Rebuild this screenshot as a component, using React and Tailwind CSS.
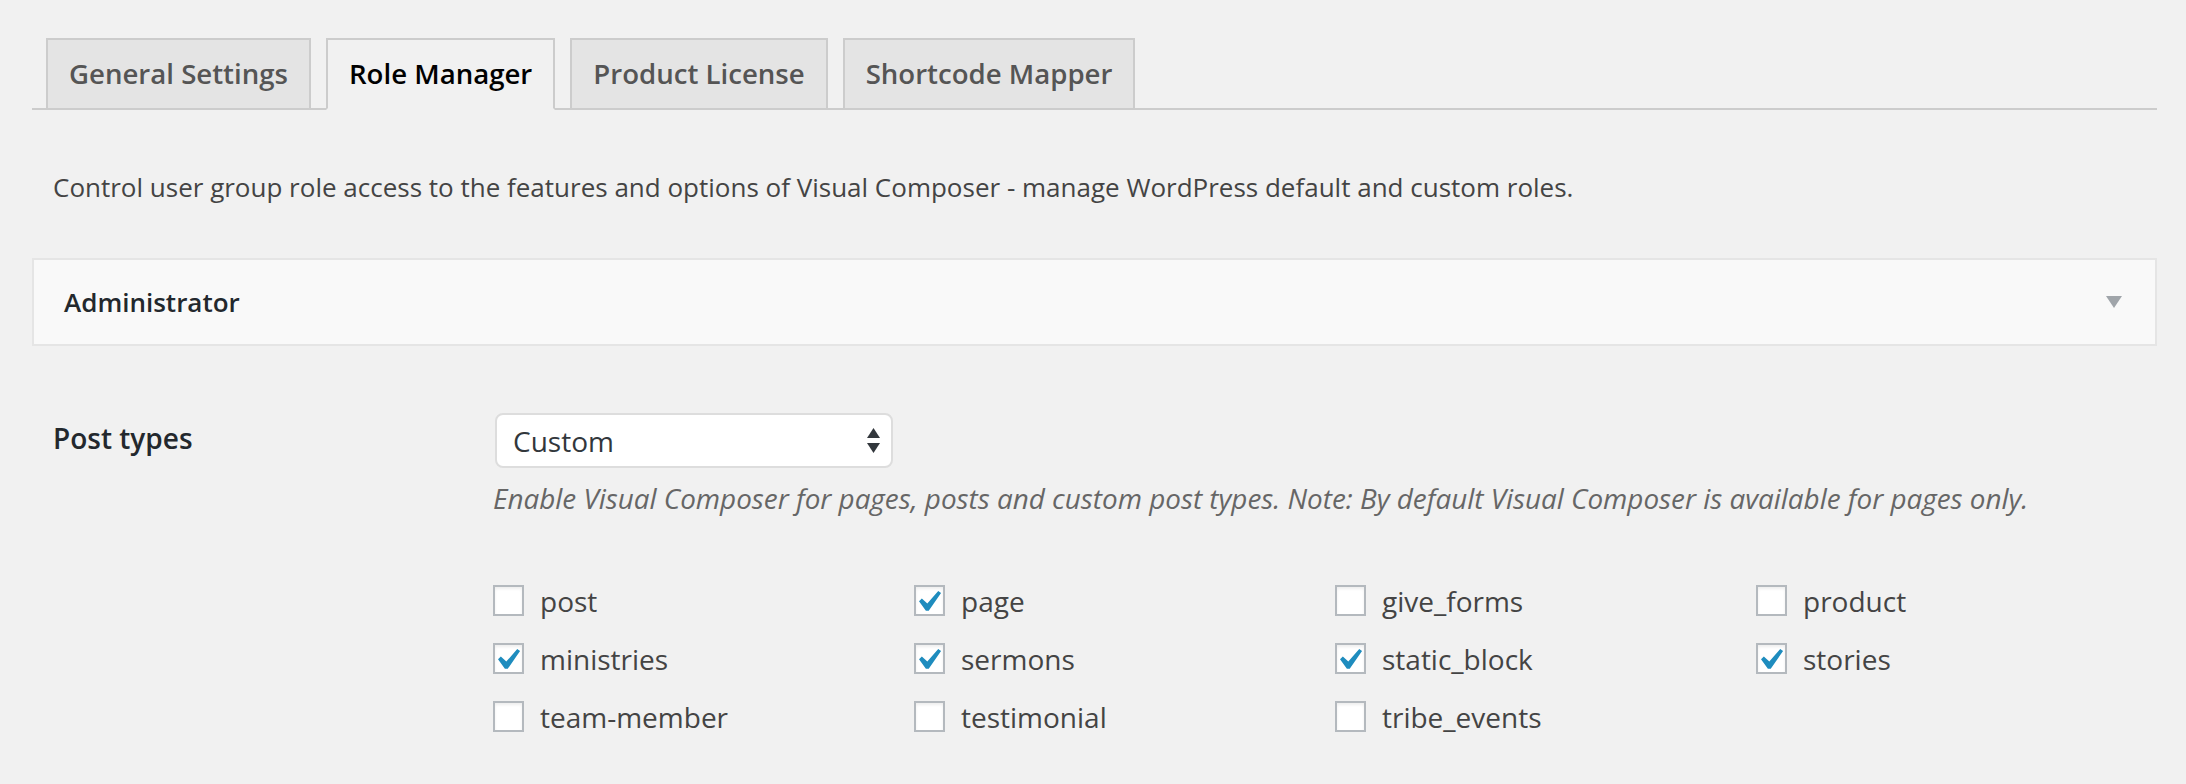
import React from "react";

const tabs = ["General Settings", "Role Manager", "Product License", "Shortcode Mapper"];

const items = [
  ["post", false],
  ["page", true],
  ["give_forms", false],
  ["product", false],
  ["ministries", true],
  ["sermons", true],
  ["static_block", true],
  ["stories", true],
  ["team-member", false],
  ["testimonial", false],
  ["tribe_events", false],
];

function Check({ checked }) {
  return (
    <span className="relative block h-[31px] w-[31px] shrink-0 border-2 border-[#b4b9be] bg-white shadow-[inset_0_2px_3px_rgba(0,0,0,0.07)]">
      {checked && (
        <svg className="absolute left-[-2px] top-[-2px]" width="31" height="31" viewBox="3.42 2.06 14.6 14.6">
          <path d="M14.83 4.89l1.34.94-5.81 8.38H9.02L5.78 9.67l1.34-1.25 2.57 2.4z" fill="#1e8cbe" />
        </svg>
      )}
    </span>
  );
}

export default function App() {
  return (
    <div className="min-h-[784px] w-full bg-[#f1f1f1] pl-[32px] pr-[29px] pt-[38px] text-[#444] [font-family:'Open_Sans',sans-serif]">
      <div className="flex gap-[15px] border-b-2 border-[#ccc] pl-[14px]">
        {tabs.map((t, i) =>
          i === 1 ? (
            <div
              key={t}
              className="-mb-[2px] flex h-[72px] items-center border-2 border-[#ccc] border-b-[#f1f1f1] bg-[#f1f1f1] px-[21px] text-[27.6px] font-semibold text-black"
            >
              {t}
            </div>
          ) : (
            <div
              key={t}
              className="-mb-[2px] flex h-[72px] items-center border-2 border-[#ccc] bg-[#e4e4e4] px-[21px] text-[27.6px] font-semibold text-[#555]"
            >
              {t}
            </div>
          )
        )}
      </div>

      <p className="mt-[60px] pl-[21px] text-[26px] leading-[35px] text-[#444]">
        Control user group role access to the features and options of Visual Composer - manage WordPress default and custom roles.
      </p>

      <div className="mt-[53px] flex h-[88px] items-center justify-between border-2 border-[#e5e5e5] bg-[#f9f9f9] pl-[30px] pr-[33px]">
        <span className="text-[26px] font-semibold text-[#23282d]">Administrator</span>
        <svg width="16" height="12" viewBox="0 0 16 12">
          <path d="M0 0H16L8 12Z" fill="#a0a5aa" />
        </svg>
      </div>

      <div className="mt-[67px] flex items-start">
        <div className="mt-[8px] w-[461px] shrink-0 pl-[21px] text-[28px] font-semibold leading-[35px] text-[#23282d]">
          Post types
        </div>
        <div className="flex flex-col">
          <div className="ml-[2px] flex h-[55px] w-[398px] items-center justify-between rounded-[8px] border-2 border-[#ddd] bg-white pl-[16px] pr-[11px] text-[28px] text-[#32373c]">
            <span>Custom</span>
            <svg width="13" height="25" viewBox="0 0 13 25">
              <path d="M6.5 0L13 10H0Z" fill="#32373c" />
              <path d="M0 15H13L6.5 25Z" fill="#32373c" />
            </svg>
          </div>
          <p className="mt-[13px] text-[27.85px] italic leading-[35px] text-[#666]">
            Enable Visual Composer for pages, posts and custom post types. Note: By default Visual Composer is available for pages only.
          </p>
          <div className="mt-[69px] grid grid-cols-[421px_421px_421px_421px] gap-y-[27px]">
            {items.map(([label, checked]) => (
              <label key={label} className="flex h-[31px] items-center gap-[16px] text-[28px] text-[#444]">
                <Check checked={checked} />
                <span>{label}</span>
              </label>
            ))}
          </div>
        </div>
      </div>
    </div>
  );
}
